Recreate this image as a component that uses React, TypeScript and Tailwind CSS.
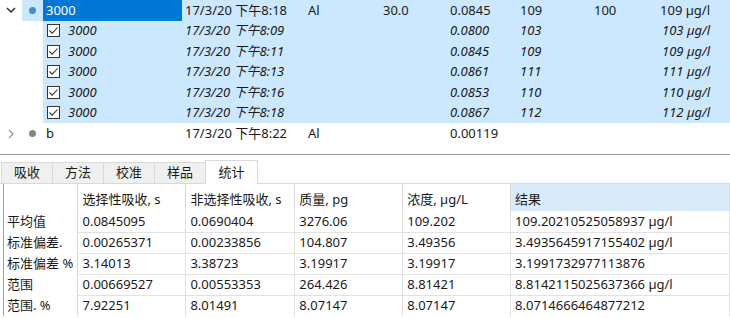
import React from "react";

const font = { fontFamily: '"Noto Sans", "Noto Sans CJK SC", sans-serif' };

const subRows = [
  { time: "17/3/20 下午8:09", abs: "0.0800", conc: "103", res: "103 µg/l" },
  { time: "17/3/20 下午8:11", abs: "0.0845", conc: "109", res: "109 µg/l" },
  { time: "17/3/20 下午8:13", abs: "0.0861", conc: "111", res: "111 µg/l" },
  { time: "17/3/20 下午8:16", abs: "0.0853", conc: "110", res: "110 µg/l" },
  { time: "17/3/20 下午8:18", abs: "0.0867", conc: "112", res: "112 µg/l" },
];

const headers = ["选择性吸收, s", "非选择性吸收, s", "质量, pg", "浓度, µg/L", "结果"];

const stats = [
  ["平均值", "0.0845095", "0.0690404", "3276.06", "109.202", "109.20210525058937 µg/l"],
  ["标准偏差.", "0.00265371", "0.00233856", "104.807", "3.49356", "3.4935645917155402 µg/l"],
  ["标准偏差 %", "3.14013", "3.38723", "3.19917", "3.19917", "3.1991732977113876"],
  ["范围", "0.00669527", "0.00553353", "264.426", "8.81421", "8.8142115025637366 µg/l"],
  ["范围. %", "7.92251", "8.01491", "8.07147", "8.07147", "8.0714666464877212"],
];

const tabs = ["吸收", "方法", "校准", "样品", "统计"];

function Check() {
  return (
    <div className="w-[13px] h-[13px] bg-white border border-[#333] flex items-center justify-center">
      <svg width="11" height="11" viewBox="0 0 11 11">
        <path d="M1.5 5.5 L4.2 8.2 L9.5 2.5" fill="none" stroke="#333" strokeWidth="1.1" />
      </svg>
    </div>
  );
}

function Cols({ time, el, mass, abs, conc, std, res, italic }: { time: string; el?: string; mass?: string; abs: string; conc?: string; std?: string; res?: string; italic?: boolean }) {
  return (
    <div className={`flex items-center h-full ${italic ? "italic" : ""}`}>
      <div className="w-[126px] pl-[3px]">{time}</div>
      <div className="w-[75px]">{el}</div>
      <div className="w-[67px]">{mass}</div>
      <div className="w-[70px]">{abs}</div>
      <div className="w-[74px]">{conc}</div>
      <div className="w-[50px]">{std}</div>
      <div className="w-[66px] text-right whitespace-nowrap">{res}</div>
    </div>
  );
}

export default function App() {
  return (
    <div className="w-[730px] h-[318px] bg-white overflow-hidden text-[13px] text-[#1a1a1a]" style={font}>
      <div className="h-[155px] border-b border-[#a0a0a0]">
        <div className="flex h-[20.5px] items-center">
          <div className="w-[22px] flex justify-center">
            <svg width="10" height="6" viewBox="0 0 10 6">
              <path d="M1 1 L5 5 L9 1" fill="none" stroke="#333" strokeWidth="1.5" />
            </svg>
          </div>
          <div className="flex-1 flex h-full items-center bg-[#cce8ff]">
            <div className="w-[21px] flex justify-center">
              <div className="w-[7px] h-[7px] rounded-full bg-[#3d8fd8]" />
            </div>
            <div className="w-[139px] h-full bg-[#0078d7] text-white flex items-center pl-[3px]">3000</div>
            <Cols time="17/3/20 下午8:18" el="Al" mass="30.0" abs="0.0845" conc="109" std="100" res="109 µg/l" />
          </div>
        </div>
        {subRows.map((r, i) => (
          <div key={i} className="flex h-[20.5px] items-center">
            <div className="w-[43px]" />
            <div className="flex-1 flex h-full items-center bg-[#cce8ff]">
              <div className="w-[139px] flex items-center pl-[4px] gap-[8px] italic">
                <Check />
                <span>3000</span>
              </div>
              <Cols time={r.time} abs={r.abs} conc={r.conc} res={r.res} italic />
            </div>
          </div>
        ))}
        <div className="flex h-[21px] items-center">
          <div className="w-[22px] flex justify-center">
            <svg width="6" height="10" viewBox="0 0 6 10">
              <path d="M1 1 L5 5 L1 9" fill="none" stroke="#9a9a9a" strokeWidth="1.3" />
            </svg>
          </div>
          <div className="w-[21px] flex justify-center">
            <div className="w-[7px] h-[7px] rounded-full bg-[#858585]" />
          </div>
          <div className="w-[139px] pl-[3px]">b</div>
          <Cols time="17/3/20 下午8:22" el="Al" abs="0.00119" />
        </div>
      </div>

      <div className="flex items-end h-[29px] pl-[1px] border-b border-[#d9d9d9]">
        {tabs.map((t, i) =>
          i === 4 ? (
            <div key={t} className="w-[53px] h-[24px] -mb-px bg-white border border-b-0 border-[#d9d9d9] flex items-center justify-center">
              {t}
            </div>
          ) : (
            <div key={t} className="w-[51px] h-[21px] bg-[#f0f0f0] border-t border-l border-[#d9d9d9] flex items-center justify-center">
              {t}
            </div>
          )
        )}
      </div>

      <div className="ml-[3px] border-l border-[#a0a0a0]">
        <table className="border-collapse table-fixed">
          <colgroup>
            <col className="w-[74px]" />
            <col className="w-[108px]" />
            <col className="w-[109px]" />
            <col className="w-[108px]" />
            <col className="w-[108px]" />
            <col className="w-[219px]" />
          </colgroup>
          <tbody>
            <tr className="h-[27px]">
              <td className="border-r border-[#dadada]" />
              {headers.map((h, i) => (
                <td
                  key={h}
                  className={`align-bottom pb-[2px] pl-[4px] border-r border-[#dadada] whitespace-nowrap ${i === 4 ? "bg-[#d9ebf9]" : ""}`}
                >
                  {h}
                </td>
              ))}
            </tr>
            {stats.map((row, ri) => (
              <tr key={row[0]} className="h-[21px]">
                <td className="pl-[3px] whitespace-nowrap border-r border-[#dadada] leading-none">{row[0]}</td>
                {row.slice(1).map((c, j) => (
                  <td
                    key={j}
                    className={`pl-[4px] border-r border-[#e2e2e2] whitespace-nowrap leading-none ${ri > 0 ? "border-t" : ""}`}
                  >
                    {c}
                  </td>
                ))}
              </tr>
            ))}
          </tbody>
        </table>
      </div>
    </div>
  );
}
